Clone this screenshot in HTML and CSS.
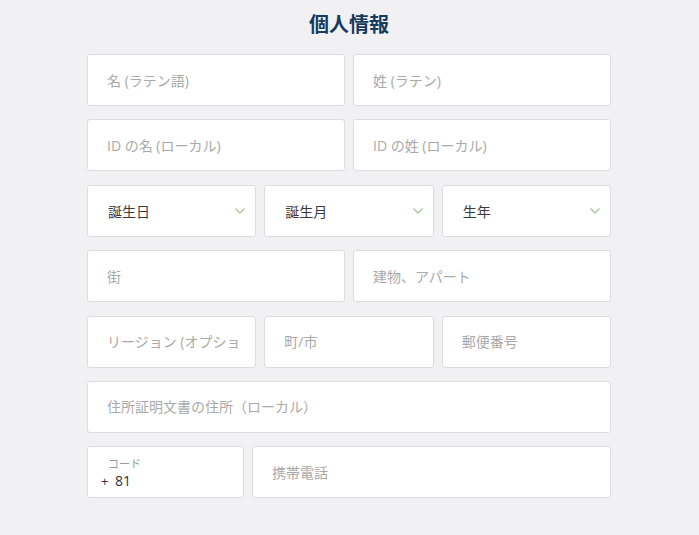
FILE: index.html
```html
<!DOCTYPE html>
<html lang="ja">
<head>
<meta charset="utf-8">
<title>個人情報</title>
<link rel="stylesheet" href="styles.css">
</head>
<body>
<main class="form">
  <h1 class="title">個人情報</h1>
  <div class="rows">
    <div class="row two">
      <input class="field" placeholder="名 (ラテン語)">
      <input class="field" placeholder="姓 (ラテン)">
    </div>
    <div class="row two">
      <input class="field" placeholder="ID の名 (ローカル)">
      <input class="field" placeholder="ID の姓 (ローカル)">
    </div>
    <div class="row three">
      <div class="field select"><span>誕生日</span><svg class="chev" viewBox="0 0 12 8" width="12" height="8"><path d="M1.5 1.5 L6 6 L10.5 1.5" fill="none" stroke="#a9c89c" stroke-width="1.4"/></svg></div>
      <div class="field select"><span>誕生月</span><svg class="chev" viewBox="0 0 12 8" width="12" height="8"><path d="M1.5 1.5 L6 6 L10.5 1.5" fill="none" stroke="#a9c89c" stroke-width="1.4"/></svg></div>
      <div class="field select"><span>生年</span><svg class="chev" viewBox="0 0 12 8" width="12" height="8"><path d="M1.5 1.5 L6 6 L10.5 1.5" fill="none" stroke="#a9c89c" stroke-width="1.4"/></svg></div>
    </div>
    <div class="row two">
      <input class="field" placeholder="街">
      <input class="field" placeholder="建物、アパート">
    </div>
    <div class="row three">
      <input class="field narrow-end" placeholder="リージョン (オプショ">
      <input class="field" placeholder="町/市">
      <input class="field" placeholder="郵便番号">
    </div>
    <div class="row one">
      <input class="field" placeholder="住所証明文書の住所（ローカル）">
    </div>
    <div class="row phone">
      <div class="field code">
        <span class="code-label">コード</span>
        <span class="code-value"><span class="plus">+</span>81</span>
      </div>
      <input class="field" placeholder="携帯電話">
    </div>
  </div>
</main>
</body>
</html>
```

FILE: styles.css
```css
html, body {
  margin: 0;
  padding: 0;
  background: #f1f1f3;
}
body {
  font-family: "Open Sans", "Noto Sans CJK JP", sans-serif;
  color: #333;
}
.form {
  width: 524px;
  margin: 0 0 0 87px;
  padding-top: 10px;
}
.title {
  margin: 0 0 16px;
  font-size: 20px;
  line-height: 28px;
  font-weight: 700;
  color: #163b5e;
  text-align: center;
  font-family: "Noto Sans CJK JP", sans-serif;
}
.rows {
  display: flex;
  flex-direction: column;
  gap: 13.4px;
}
.row {
  display: grid;
  gap: 8px;
}
.row.two { grid-template-columns: 1fr 1fr; }
.row.three { grid-template-columns: 1fr 1fr 1fr; }
.row.one { grid-template-columns: 1fr; }
.row.phone { grid-template-columns: 157px 1fr; }
.field {
  box-sizing: border-box;
  height: 52px;
  width: 100%;
  min-width: 0;
  background: #fff;
  border: 1px solid #dcdcde;
  border-radius: 3px;
  padding: 0 19px;
  font-family: "Open Sans", "Noto Sans CJK JP", sans-serif;
  font-size: 14px;
  color: #333;
  outline: none;
  margin: 0;
}
.field.narrow-end {
  padding-right: 8px;
}
.field::placeholder {
  color: #a9a9a9;
  opacity: 1;
}
.select {
  display: flex;
  align-items: center;
  justify-content: space-between;
  padding: 0 9px 0 20px;
  color: #3a3a3a;
}
.chev { display: block; }
.code {
  display: flex;
  flex-direction: column;
  padding: 10px 12px 0 13px;
}
.code-label {
  font-size: 11px;
  line-height: 14px;
  color: #999;
  padding-left: 7px;
}
.code-value {
  font-size: 14px;
  line-height: 20px;
  color: #333;
}
.plus {
  display: inline-block;
  width: 14px;
  font-size: 13px;
}
```
